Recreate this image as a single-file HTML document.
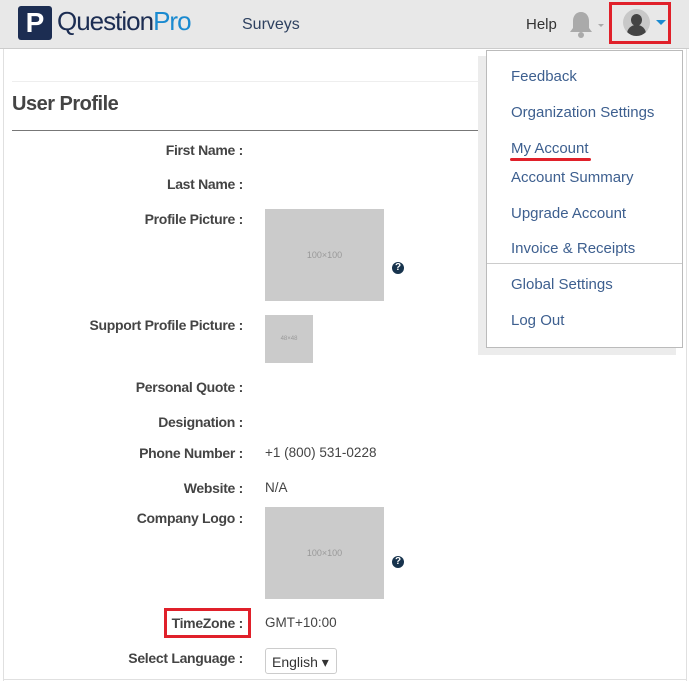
<!DOCTYPE html>
<html><head><style>
body{margin:0;width:689px;height:681px;overflow:hidden;background:#fff;font-family:"Liberation Sans",sans-serif;position:relative}
.a{position:absolute}
.lab{position:absolute;right:446px;font-weight:bold;font-size:14px;color:#444;white-space:nowrap;letter-spacing:-0.3px}
.val{position:absolute;left:265px;font-size:13.5px;color:#444}
.img{position:absolute;background:#cbcbcb;color:#999;font-size:9px;display:flex;align-items:center;justify-content:center}
.q{position:absolute;width:12px;height:12px;border-radius:50%;background:#17334d;color:#fff;font-size:10px;font-weight:bold;text-align:center;line-height:12px}
.dd a{display:block;position:absolute;left:24px;color:#3d5f8f;font-size:15px;text-decoration:none;white-space:nowrap}
</style></head><body>
<div class="a" style="left:0;top:0;width:689px;height:48px;background:#e8e8e8;border-bottom:1px solid #ccc"></div>
<div class="a" style="left:18px;top:6px;width:34px;height:34px;background:#1c2d52;border-radius:3px;color:#fff;font-weight:bold;font-size:28px;text-align:center;line-height:34px">P</div>
<div class="a" style="left:57px;top:6px;font-size:26px;color:#1c2d52;letter-spacing:-1px">Question<span style="color:#1a8ad0">Pro</span></div>
<div class="a" style="left:242px;top:16px;font-size:16px;color:#2e4160">Surveys</div>
<div class="a" style="left:526px;top:16px;font-size:15px;color:#333">Help</div>
<svg class="a" style="left:568px;top:10px" width="40" height="30"><path d="M13 2c-5 0-8 4-8 9v7l-3 4h22l-3-4v-7c0-5-3-9-8-9z" fill="#aaa"/><circle cx="13" cy="25" r="3" fill="#aaa"/><path d="M30 14l3 3 3-3z" fill="#aaa"/></svg>
<div class="a" style="left:609px;top:2px;width:62px;height:42px;border:3px solid #e0202a;box-sizing:border-box"></div>
<div class="a" style="left:623px;top:9px;width:27px;height:27px;border-radius:50%;background:#c8c8c8;overflow:hidden"><div class="a" style="left:8px;top:5px;width:11px;height:12px;border-radius:50%;background:#444"></div><div class="a" style="left:4px;top:16px;width:19px;height:14px;border-radius:9px 9px 0 0;background:#444"></div></div>
<svg class="a" style="left:656px;top:20px" width="10" height="6"><path d="M0 0h10l-5 5z" fill="#1a8ad0"/></svg>
<div class="a" style="left:3px;top:49px;width:1px;height:632px;background:#e0e0e0"></div>
<div class="a" style="left:686px;top:49px;width:1px;height:632px;background:#e0e0e0"></div>
<div class="a" style="left:3px;top:679px;width:684px;height:1px;background:#e0e0e0"></div>
<div class="a" style="left:12px;top:81px;width:470px;height:1px;background:#eee"></div>
<div class="a" style="left:12px;top:93px;font-size:20px;font-weight:bold;color:#444;letter-spacing:-0.5px">User Profile</div>
<div class="a" style="left:12px;top:130px;width:466px;height:1px;background:#777"></div>
<div class="lab" style="top:142px">First Name :</div>
<div class="lab" style="top:176px">Last Name :</div>
<div class="lab" style="top:211px">Profile Picture :</div>
<div class="img" style="left:265px;top:209px;width:119px;height:92px">100×100</div>
<div class="q" style="left:392px;top:262px">?</div>
<div class="lab" style="top:317px">Support Profile Picture :</div>
<div class="img" style="left:265px;top:315px;width:48px;height:48px;font-size:6px">48×48</div>
<div class="lab" style="top:379px">Personal Quote :</div>
<div class="lab" style="top:414px">Designation :</div>
<div class="lab" style="top:445px">Phone Number :</div><div class="val" style="top:445px">+1 (800) 531-0228</div>
<div class="lab" style="top:480px">Website :</div><div class="val" style="top:480px">N/A</div>
<div class="lab" style="top:510px">Company Logo :</div>
<div class="img" style="left:265px;top:507px;width:119px;height:92px">100×100</div>
<div class="q" style="left:392px;top:556px">?</div>
<div class="a" style="left:164px;top:608px;width:87px;height:30px;border:3px solid #e0202a;box-sizing:border-box"></div>
<div class="lab" style="top:615px">TimeZone :</div><div class="val" style="top:615px">GMT+10:00</div>
<div class="lab" style="top:650px">Select Language :</div>
<div class="a" style="left:265px;top:648px;width:72px;height:26px;border:1px solid #ccc;border-radius:3px;font-size:14px;color:#333;line-height:26px;padding-left:6px;box-sizing:border-box">English ▾</div>
<div class="a" style="left:478px;top:56px;width:198px;height:299px;background:#ececec"></div>
<div class="a dd" style="left:486px;top:50px;width:197px;height:298px;background:#fff;border:1px solid #bbb;box-sizing:border-box">
<a style="top:17px">Feedback</a><a style="top:53px">Organization Settings</a><a style="top:89px">My Account</a>
<div class="a" style="left:23px;top:107px;width:81px;height:3px;background:#e0202a;border-radius:2px"></div>
<a style="top:118px">Account Summary</a><a style="top:154px">Upgrade Account</a><a style="top:189px">Invoice &amp; Receipts</a>
<div class="a" style="left:0;top:212px;width:195px;height:1px;background:#ccc"></div>
<a style="top:225px">Global Settings</a><a style="top:261px">Log Out</a></div>
</body></html>
